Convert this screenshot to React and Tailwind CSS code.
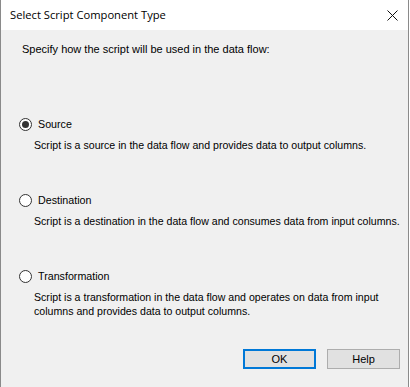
import React from "react";

function Radio({ checked }) {
  return (
    <span className="flex h-[13px] w-[13px] shrink-0 items-center justify-center rounded-full border border-[#333333] bg-white">
      {checked ? <span className="h-[7px] w-[7px] rounded-full bg-[#333333]" /> : null}
    </span>
  );
}

function Option({ label, checked, lines, mt }) {
  return (
    <div className={mt}>
      <div className="flex h-[13px] items-center gap-[6px]">
        <Radio checked={checked} />
        <span className="text-[10.7px] leading-[13px]">{label}</span>
      </div>
      <div className="ml-[15px] mt-[7px] whitespace-nowrap text-[10.6px] leading-[14px]">
        {lines.map((l, i) => (
          <div key={i}>{l}</div>
        ))}
      </div>
    </div>
  );
}

export default function App() {
  return (
    <div className="h-[387px] w-[410px] overflow-hidden bg-white">
      <div
        className="flex h-[387px] w-[409px] flex-col border-x border-[#8a8a8a] bg-[#f0f0f0] text-[11px] text-black"
        style={{ fontFamily: '"Liberation Sans", Arial, sans-serif' }}
      >
        <div className="flex h-[30px] shrink-0 items-center justify-between bg-white pl-[9px] pr-[9px]">
          <span
            className="text-[11.2px] text-black"
            style={{ fontFamily: '"Open Sans", "Noto Sans", sans-serif' }}
          >
            Select Script Component Type
          </span>
          <svg width="11" height="11" viewBox="0 0 11 11" className="mr-[1px]">
            <path d="M0.5 0.5 L10.5 10.5 M10.5 0.5 L0.5 10.5" stroke="#111" strokeWidth="1" fill="none" />
          </svg>
        </div>
        <div className="flex flex-1 flex-col pl-[18px] pr-[8px] pt-[13px]">
          <p className="ml-[3px] leading-[13px]">Specify how the script will be used in the data flow:</p>
          <Option
            mt="mt-[62px]"
            label="Source"
            checked
            lines={["Script is a source in the data flow and provides data to output columns."]}
          />
          <Option
            mt="mt-[42px]"
            label="Destination"
            lines={["Script is a destination in the data flow and consumes data from input columns."]}
          />
          <Option
            mt="mt-[42px]"
            label="Transformation"
            lines={[
              "Script is a transformation in the data flow and operates on data from input",
              "columns and provides data to output columns.",
            ]}
          />
          <div className="mt-[31px] flex justify-end gap-[11px]">
            <button className="flex h-[20px] w-[73px] items-center justify-center border-2 border-[#0078d7] bg-[#e1e1e1] text-[11px]">
              OK
            </button>
            <button className="flex h-[20px] w-[73px] items-center justify-center border border-[#adadad] bg-[#e1e1e1] text-[11px]">
              Help
            </button>
          </div>
        </div>
      </div>
    </div>
  );
}
